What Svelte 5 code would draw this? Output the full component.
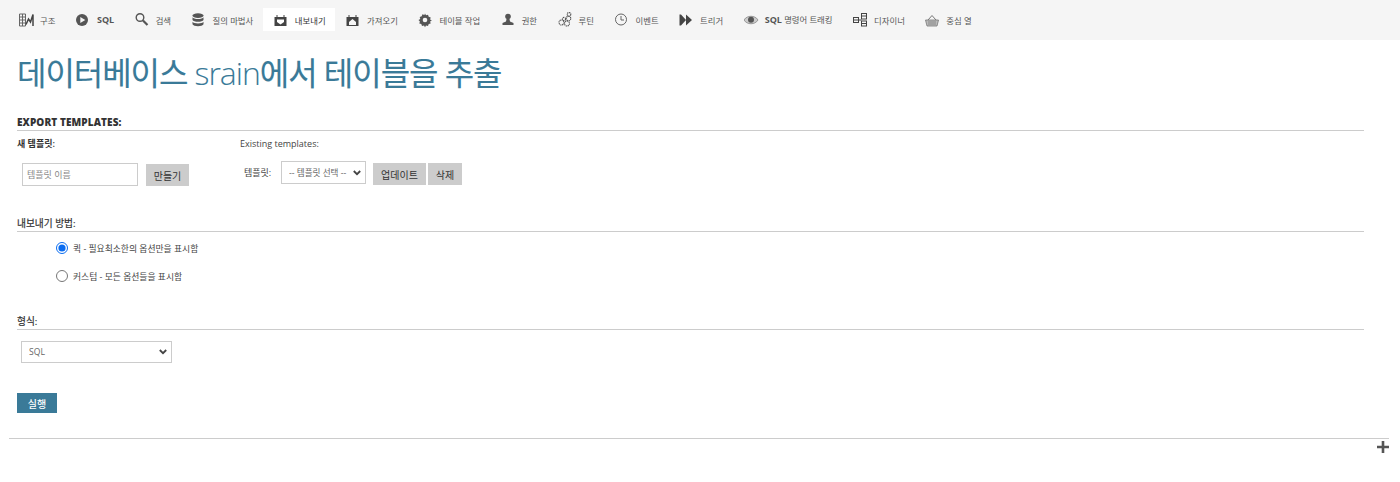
<script>
  const tabs = [
    { id: 'structure', label: '구조' },
    { id: 'sql', label: 'SQL', bold: true },
    { id: 'search', label: '검색' },
    { id: 'query', label: '질의 마법사' },
    { id: 'export', label: '내보내기', active: true },
    { id: 'import', label: '가져오기' },
    { id: 'ops', label: '테이블 작업' },
    { id: 'priv', label: '권한' },
    { id: 'routine', label: '루틴' },
    { id: 'event', label: '이벤트' },
    { id: 'trigger', label: '트리거' },
    { id: 'track', label: '명령어 트래킹', prefix: 'SQL' },
    { id: 'designer', label: '디자이너' },
    { id: 'central', label: '중심 열' }
  ];
</script>

<nav class="tabs">
  {#each tabs as t}
    <div class="tab" class:active={t.active}>
      <svg class="icon" viewBox="0 0 16 16" aria-hidden="true">
        {#if t.id === 'structure'}
          <path d="M.5 2h6v12h-6zM.5 5h6M.5 8h6M.5 11h6M3.500 2v12" fill="none" stroke="#666" stroke-width="1"/>
          <path d="M7 12.500 9.500 7l2 3 2.500-7.500V14" fill="none" stroke="#444" stroke-width="1.500"/>
        {:else if t.id === 'sql'}
          <circle cx="6" cy="8" r="6" fill="#555"/><path d="M4.300 5v6l5-3z" fill="#f5f5f5"/>
        {:else if t.id === 'search'}
          <circle cx="5" cy="5.500" r="3.800" fill="none" stroke="#555" stroke-width="1.400"/><path d="m8 8.500 4.500 4.500" stroke="#555" stroke-width="2.200"/>
        {:else if t.id === 'query'}
          <ellipse cx="6" cy="3.600" rx="5.500" ry="2.400" fill="#555"/>
          <path d="M.5 5.200C1.500 7.600 10.500 7.600 11.500 5.200V8C10.500 10.400 1.500 10.400 .5 8z" fill="#555"/>
          <path d="M.5 9.700C1.500 12 10.500 12 11.500 9.700V12.300C10.500 14.800 1.500 14.800 .5 12.300z" fill="#555"/>
        {:else if t.id === 'export' || t.id === 'import'}
          <path d="M.5 5h2V3h1v2h6V3h1v2h2v9H.5z" fill="#444"/>
          {#if t.id === 'export'}
            <path d="M3 7.500h7v2.500L6.500 12.500 3 10z" fill="#fff"/>
          {:else}
            <path d="M6.500 7 10 10v3H3v-3z" fill="#f5f5f5"/>
          {/if}
        {:else if t.id === 'ops'}
          <path d="m7 1.500 1 1.800 2-.6.700 2 2 .7-.6 2 1.800 1-1.800 1 .6 2-2 .7-.7 2-2-.6-1 1.800-1-1.800-2 .6-.7-2-2-.7.6-2L.5 8l1.800-1-.6-2 2-.7.700-2 2 .6z" fill="#555"/>
          <circle cx="7" cy="8" r="2.300" fill="#f5f5f5"/>
        {:else if t.id === 'priv'}
          <circle cx="7" cy="4.500" r="2.800" fill="#555"/><path d="M5.500 7h3l.5 2.500 3.500 1.500v2h-11v-2L5 9.500z" fill="#555"/>
        {:else if t.id === 'routine'}
          <g fill="none" stroke="#555" stroke-width="1.100" stroke-dasharray="1.300 .6">
            <circle cx="3.500" cy="10.500" r="2.500"/><circle cx="9" cy="11.500" r="2.500"/><circle cx="10.500" cy="6.500" r="2.300"/><circle cx="11" cy="2.300" r="1.800"/><circle cx="6" cy="7" r="1.600"/>
          </g>
        {:else if t.id === 'event'}
          <circle cx="7" cy="7.500" r="5.500" fill="none" stroke="#555" stroke-width=".9"/><path d="M7 4v4h3" fill="none" stroke="#555" stroke-width=".9"/>
        {:else if t.id === 'trigger'}
          <path d="M.5 2.500h1.500L7 8l-5 5.500H.5zM7 2.500 13 8l-6 5.500z" fill="#444"/>
        {:else if t.id === 'track'}
          <path d="M0 8c3-5 11-5 14 0-3 5-11 5-14 0z" fill="#ccc" stroke="#888" stroke-width=".8"/><circle cx="7" cy="7.800" r="3" fill="#555"/>
        {:else if t.id === 'designer'}
          <g fill="none" stroke="#444" stroke-width="1">
            <rect x=".5" y="5.500" width="5" height="5"/><rect x="8.500" y="1.500" width="5" height="5.500"/><rect x="8.500" y="9" width="5" height="5"/>
          </g>
          <path d="M5.500 8h3M.8 8h4.500M8.800 4h4.500M8.800 11.500h4.500" stroke="#444" stroke-width="1"/>
        {:else}
          <path d="M.5 8h13L12 14H2z" fill="#bbb" stroke="#777" stroke-width=".8"/>
          <path d="M3 8 7 3.500 11 8" fill="none" stroke="#777"/><path d="M3 10h8M3 12h8" stroke="#777" stroke-width=".7"/>
        {/if}
      </svg>
      <span class:bold={t.bold}>{#if t.prefix}<b>{t.prefix}</b>{' '}{/if}{t.label}</span>
    </div>
  {/each}
</nav>

<main>
  <h2>데이터베이스 <span class="latin">srain</span>에서 테이블을 추출</h2>

  <section class="templates">
    <h3 class="legend caps">Export templates:</h3>
    <div class="tpl-cols">
      <div class="tpl-new">
        <div class="sub strong">새 템플릿:</div>
        <div class="row new-row">
          <input class="name" type="text" placeholder="템플릿 이름" />
          <button class="btn create">만들기</button>
        </div>
      </div>
      <div class="tpl-existing">
        <div class="sub">Existing templates:</div>
        <div class="row exist-row">
          <span class="lbl">템플릿:</span>
          <select class="tpl-select"><option>-- 템플릿 선택 --</option></select>
          <button class="btn update">업데이트</button>
          <button class="btn del">삭제</button>
        </div>
      </div>
    </div>
  </section>

  <section class="method">
    <h3 class="legend">내보내기 방법:</h3>
    <label class="radio first"><input type="radio" name="m" checked /> <span>퀵 - 필요최소한의 옵션만을 표시함</span></label>
    <label class="radio"><input type="radio" name="m" /> <span>커스텀 - 모든 옵션들을 표시함</span></label>
  </section>

  <section class="format">
    <h3 class="legend">형식:</h3>
    <select class="fmt"><option>SQL</option></select>
  </section>

  <button class="go">실행</button>
</main>

<div class="foot">
  <hr />
  <div class="plus"><svg viewBox="0 0 12 12" width="12" height="12" aria-hidden="true"><path d="M6 0v12M0 6h12" stroke="#555" stroke-width="2.600"/></svg></div>
</div>

<style>
  :global(body) {
    margin: 0;
    background: #fff;
    font-family: "Open Sans", "Noto Sans CJK KR", sans-serif;
    color: #444;
    font-size: 9px;
  }
  .tabs {
    display: flex;
    align-items: flex-end;
    height: 40px;
    box-sizing: border-box;
    padding: 8px 0 9px 8px;
    background: #f5f5f5;
  }
  .tab {
    display: flex;
    align-items: center;
    gap: 5px;
    height: 23px;
    padding: 0 9.500px 0 11px;
    color: #555;
    font-size: 8.400px;
    white-space: nowrap;
  }
  .tab.active { background: #fff; color: #333; }
  .tab b, .bold { font-weight: 700; font-size: 9px; }
  .icon { width: 16px; height: 16px; flex: none; }
  main { padding: 0 36px 0 17px; }
  h2 {
    margin: 0;
    padding-top: 11px;
    height: 50px;
    box-sizing: content-box;
    font-size: 32px;
    line-height: 43px;
    font-weight: 400;
    color: #3a7a98;
    letter-spacing: -1.050px;
    -webkit-text-stroke: .12px #3a7a98;
    white-space: nowrap;
  }
  .latin { font-weight: 300; -webkit-text-stroke: 0; }
  .legend {
    margin: 0;
    padding-bottom: 1px;
    font-size: 9.700px;
    line-height: 13px;
    font-weight: 400;
    color: #333;
    -webkit-text-stroke: .2px #333;
    border-bottom: 1px solid #ccc;
  }
  .caps {
    text-transform: uppercase;
    font-size: 10px;
    line-height: 14px;
    font-weight: 800;
    color: #333;
    -webkit-text-stroke: 0;
    letter-spacing: .1px;
  }
  .templates { margin-top: 14px; }
  .tpl-cols { display: flex; }
  .tpl-new { width: 223px; }
  .sub { margin-top: 7px; line-height: 12px; }
  .strong { font-weight: 600; color: #333; }
  .row { display: flex; align-items: flex-start; }
  .new-row { margin: 13px 0 0 5px; gap: 8px; }
  .exist-row { margin: 11px 0 0 4px; }
  input.name {
    box-sizing: border-box;
    width: 116px;
    height: 23px;
    padding: 0 4px;
    border: 1px solid #ccc;
    font: inherit;
    background: #fff;
  }
  input.name::placeholder { color: #888; }
  .btn {
    box-sizing: border-box;
    height: 22px;
    padding: 0;
    border: 0;
    background: #ccc;
    color: #333;
    font: inherit;
    font-size: 10px;
  }
  .create { width: 43px; margin-top: 1px; }
  .lbl { width: 37px; line-height: 23px; }
  select {
    appearance: none;
    box-sizing: border-box;
    border: 1px solid #ccc;
    background-color: #fff;
    background-image: url("data:image/svg+xml,%3Csvg xmlns='http://www.w3.org/2000/svg' width='8' height='6'%3E%3Cpath d='M.8 1 4 4.200 7.200 1' fill='none' stroke='%23444' stroke-width='1.800'/%3E%3C/svg%3E");
    background-repeat: no-repeat;
    background-position: right 4px center;
    color: #666;
    font: inherit;
    font-size: 8.600px;
  }
  .tpl-select {
    width: 85px;
    height: 23px;
    margin-right: 7px;
    padding: 0 0 0 7px;
  }
  .update { width: 53px; margin: 2px 2px 0 0; }
  .del { width: 34px; margin-top: 2px; }
  .method { margin-top: 31px; }
  .radio { display: flex; align-items: center; line-height: 14px; margin: 0 0 0 39px; height: 28px; color: #444; font-size: 8.800px; }
  .radio.first { margin-top: 3px; }
  .radio input { width: 12px; height: 12px; margin: 0 5px 2px 0; accent-color: #0a6cf0; }
  .format { margin-top: 24px; }
  .fmt {
    display: block;
    width: 151px;
    height: 22px;
    margin: 11px 0 0 4px;
    padding: 0 0 0 7px;
  }
  .go {
    display: block;
    width: 40px;
    height: 20px;
    margin-top: 30px;
    padding: 0;
    border: 0;
    background: #3a7a98;
    color: #fff;
    font: inherit;
    font-size: 10px;
    font-weight: 500;
  }
  .foot { padding: 25px 11px 0 9px; }
  hr { margin: 0; border: 0; border-top: 1px solid #ccc; }
  .plus { display: flex; justify-content: flex-end; margin-top: 2px; }
</style>
